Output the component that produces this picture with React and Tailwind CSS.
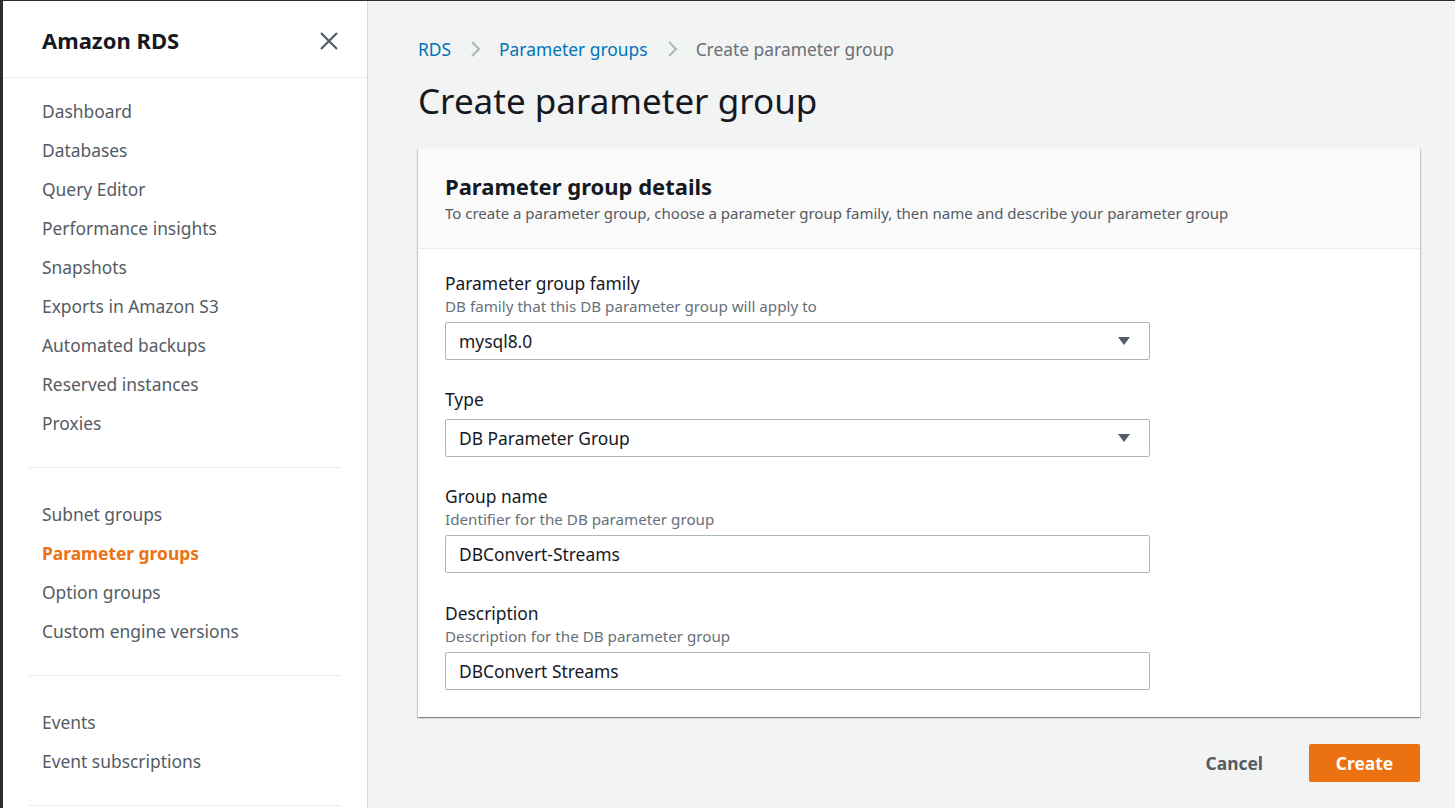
import React from "react";

const font = { fontFamily: '"Noto Sans", "Open Sans", Arial, sans-serif' };

function Caret() {
  return (
    <svg width="14" height="10" viewBox="0 0 14 10" className="shrink-0">
      <path d="M1 1 L13 1 L7 9 Z" fill="#545b64" />
    </svg>
  );
}

function Chevron() {
  return (
    <svg width="12" height="18" viewBox="0 0 12 18" className="mx-[18px]">
      <path d="M3 2 L10 9 L3 16" fill="none" stroke="#aab7b8" strokeWidth="2" />
    </svg>
  );
}

function NavItem({ children, active }) {
  return (
    <div
      className={
        "h-[39px] flex items-center text-[17.4px] " +
        (active ? "text-[#ec7211] font-bold" : "text-[#545b64]")
      }
    >
      {children}
    </div>
  );
}

function Field({ label, desc, value, select, extra }) {
  return (
    <div className={"flex flex-col " + (extra || "")}>
      <div className="text-[17.4px] leading-[24px] text-[#16191f]">{label}</div>
      {desc && (
        <div className="text-[15.2px] leading-[22px] text-[#687078]">{desc}</div>
      )}
      <div
        className={
          (desc ? "mt-[5px] " : "mt-[8px] ") +
          "w-[705px] h-[38px] border border-[#aab7b8] rounded-[2px] bg-white flex items-center justify-between pl-[13px] pr-[18px] text-[17.4px] text-[#16191f]"
        }
      >
        <span>{value}</span>
        {select && <Caret />}
      </div>
    </div>
  );
}

export default function App() {
  return (
    <div className="w-[1455px] h-[808px] flex bg-[#f2f3f3] overflow-hidden border-t border-[#2a2e33]" style={font}>
      <div className="w-[3px] bg-[#2a2e33] shrink-0" />
      <aside className="w-[365px] shrink-0 bg-white border-r border-[#d5dbdb] flex flex-col">
        <div className="h-[77px] flex items-center justify-between pl-[39px] pr-[28px] pt-[3px] border-b border-[#eaeded]">
          <span className="text-[22px] font-bold text-[#16191f]">Amazon RDS</span>
          <svg width="20" height="20" viewBox="0 0 20 20">
            <path d="M2 2 L18 18 M18 2 L2 18" stroke="#545b64" strokeWidth="2.2" />
          </svg>
        </div>
        <div className="pl-[39px] pt-[14px]">
          {["Dashboard","Databases","Query Editor","Performance insights","Snapshots","Exports in Amazon S3","Automated backups","Reserved instances","Proxies"].map((t) => (
            <NavItem key={t}>{t}</NavItem>
          ))}
        </div>
        <div className="ml-[26px] w-[312px] border-t border-[#eaeded] mt-[24px]" />
        <div className="pl-[39px] pt-[27px]">
          <NavItem>Subnet groups</NavItem>
          <NavItem active>Parameter groups</NavItem>
          <NavItem>Option groups</NavItem>
          <NavItem>Custom engine versions</NavItem>
        </div>
        <div className="ml-[26px] w-[312px] border-t border-[#eaeded] mt-[24px]" />
        <div className="pl-[39px] pt-[27px]">
          <NavItem>Events</NavItem>
          <NavItem>Event subscriptions</NavItem>
        </div>
        <div className="ml-[26px] w-[312px] border-t border-[#eaeded] mt-[24px]" />
      </aside>
      <main className="flex-1 pl-[50px] pr-[34px] pt-[35px]">
        <div className="flex items-center text-[17.4px] h-[26px]">
          <span className="text-[#0073bb]">RDS</span>
          <Chevron />
          <span className="text-[#0073bb]">Parameter groups</span>
          <Chevron />
          <span className="text-[#687078]">Create parameter group</span>
        </div>
        <h1 className="text-[35px] leading-[46px] text-[#16191f] mt-[16px]">Create parameter group</h1>
        <div className="mt-[24px] w-[1002px] bg-white shadow-[0_1px_1px_0_rgba(0,28,36,0.3),1px_1px_1px_0_rgba(0,28,36,0.15),-1px_1px_1px_0_rgba(0,28,36,0.15)]">
          <div className="h-[101px] bg-[#fafafa] border-b border-[#eaeded] px-[27px] pt-[22px]">
            <div className="text-[22px] font-bold leading-[32px] text-[#16191f]">Parameter group details</div>
            <div className="text-[15px] leading-[22px] text-[#545b64]">
              To create a parameter group, choose a parameter group family, then name and describe your parameter group
            </div>
          </div>
          <div className="px-[27px] pt-[22px] pb-[27px] flex flex-col gap-[27px]">
            <Field label="Parameter group family" desc="DB family that this DB parameter group will apply to" value="mysql8.0" select />
            <Field label="Type" value="DB Parameter Group" select />
            <Field label="Group name" desc="Identifier for the DB parameter group" value="DBConvert-Streams" />
            <Field label="Description" desc="Description for the DB parameter group" value="DBConvert Streams" extra="mt-[1px]" />
          </div>
        </div>
        <div className="w-[1002px] flex justify-end items-center mt-[27px] gap-[26px]">
          <span className="text-[17.4px] font-bold text-[#545b64] px-[20px]">Cancel</span>
          <div className="w-[111px] h-[38px] bg-[#ec7211] rounded-[2px] flex items-center justify-center text-white text-[17.4px] font-bold">
            Create
          </div>
        </div>
      </main>
    </div>
  );
}
